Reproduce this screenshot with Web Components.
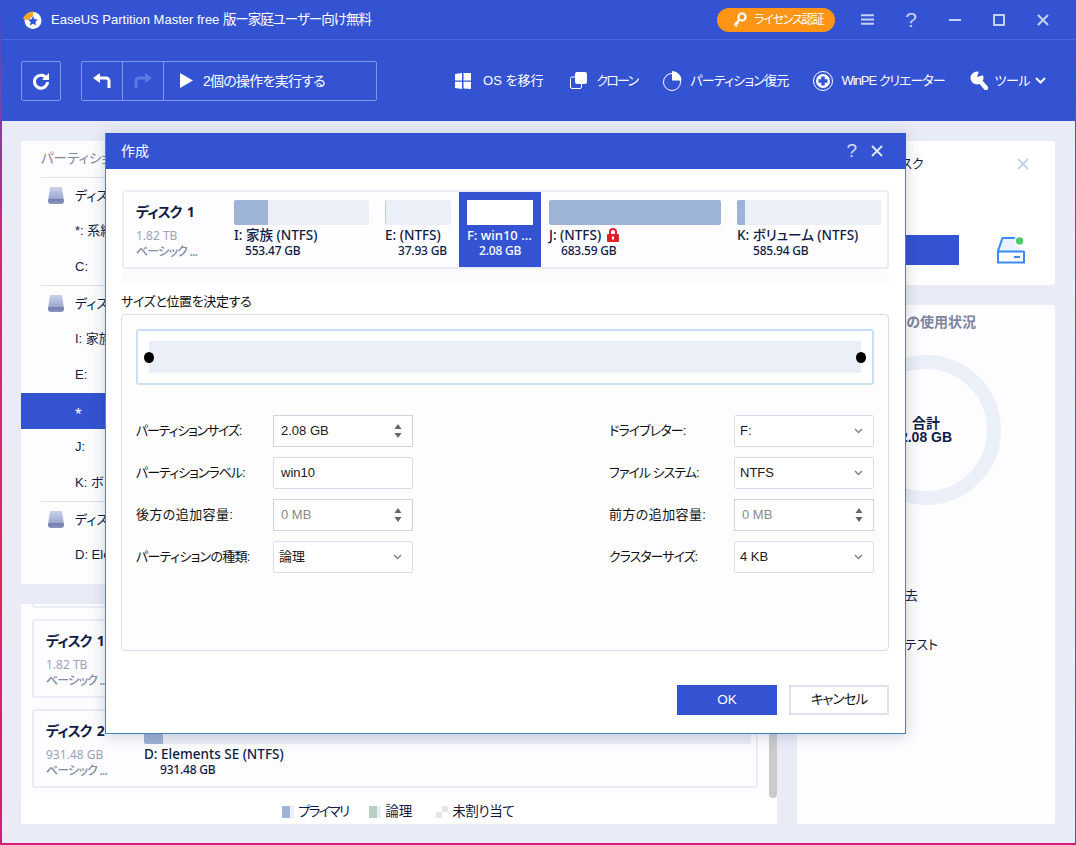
<!doctype html>
<html lang="ja">
<head>
<meta charset="utf-8">
<title>EaseUS Partition Master</title>
<style>
	html, body { margin: 0; height: 100%; }
	body {
		--ui: "Liberation Sans", "Noto Sans CJK JP", sans-serif;
		--seg: "Noto Sans", "Noto Sans CJK JP", sans-serif;
		--blue: #3353d3;
		--ink: #0f1b44;
		font: 13px/16px var(--ui);
		font-feature-settings: "palt";
		color: var(--ink);
		width: 1076px;
		height: 845px;
		box-sizing: border-box;
		padding: 0 1px 2px 2px;
		overflow: hidden;
		position: relative;
		background: linear-gradient(#3353d3 0, #d8246e 30%, #e0245f 70%, #d81a78 100%);
	}
</style>
</head>
<body>
<ep-app>
	<ep-titlebar slot="title"></ep-titlebar>
	<ep-toolbar slot="tools"></ep-toolbar>

	<ep-tree slot="tree"></ep-tree>

	<ep-diskpanel slot="disks">
		<ep-disk name="ディスク 1" cap="1.82 TB" type="ベーシック ..."></ep-disk>
		<ep-disk name="ディスク 2" cap="931.48 GB" type="ベーシック ...">
			<ep-part w="623" fill="19" label="D: Elements SE (NTFS)" size="931.48 GB" indent="16"></ep-part>
		</ep-disk>
	</ep-diskpanel>

	<ep-sidecard slot="side"></ep-sidecard>
	<ep-usage slot="side"></ep-usage>
</ep-app>

<ep-dialog heading="作成">
	<ep-disk slot="map" name="ディスク 1" cap="1.82 TB" type="ベーシック ...">
		<ep-part w="151" bar="135" fill="34" label="I: 家族 (NTFS)" size="553.47 GB" indent="11"></ep-part>
		<ep-part w="82" bar="66" fill="1" tone="#bccfc6" label="E: (NTFS)" size="37.93 GB" indent="13"></ep-part>
		<ep-part w="82" bar="66" fill="0" selected label="F: win10 ..." size="2.08 GB" indent="12"></ep-part>
		<ep-part w="188" bar="172" fill="172" label="J: (NTFS)" size="683.59 GB" indent="12">
			<svg slot="badge" width="12" height="14" viewBox="0 0 12 14"><path d="M3 6V4a3 3 0 0 1 6 0v2" fill="none" stroke="#e0202a" stroke-width="2"/><rect y="6" width="12" height="8" rx="1" fill="#e0202a"/><rect x="5" y="8.5" width="2" height="3" fill="#fff"/></svg>
		</ep-part>
		<ep-part w="152" bar="144" fill="8" label="K: ボリューム (NTFS)" size="585.94 GB" indent="16"></ep-part>
	</ep-disk>

	<ep-field slot="left" label="パーティションサイズ:" ls="-1.2" value="2.08 GB" kind="spin"></ep-field>
	<ep-field slot="left" label="パーティションラベル:" ls="-1" value="win10" kind="text"></ep-field>
	<ep-field slot="left" label="後方の追加容量:" ls="0.4" value="0 MB" kind="spin" disabled></ep-field>
	<ep-field slot="left" label="パーティションの種類:" ls="-0.7" value="論理" kind="select"></ep-field>

	<ep-field slot="right" label="ドライブレター:" ls="-0.9" value="F:" kind="select"></ep-field>
	<ep-field slot="right" label="ファイル システム:" ls="-1" value="NTFS" kind="select"></ep-field>
	<ep-field slot="right" label="前方の追加容量:" ls="0.4" value="0 MB" kind="spin" disabled></ep-field>
	<ep-field slot="right" label="クラスターサイズ:" ls="-1" value="4 KB" kind="select"></ep-field>
</ep-dialog>

<script>
const html = String.raw;

class Base extends HTMLElement {
	constructor() {
		super();
		this.attachShadow({ mode: "open" });
	}
	connectedCallback() {
		this.shadowRoot.innerHTML = this.render();
	}
	attr(name, fallback = "") {
		return this.getAttribute(name) ?? fallback;
	}
}

customElements.define("ep-app", class extends Base {
	render() {
		return html`
			<style>
				:host { display: grid; grid-template-rows: 40px 81px 1fr; height: 100%; background: #e9ecf7; }
				main {
					display: grid;
					grid-template-columns: 756px 258px;
					grid-template-rows: 443px 220px;
					column-gap: 20px;
					row-gap: 20px;
					padding: 20px 0 0 19px;
				}
				aside { grid-column: 2; grid-row: 1 / 3; display: grid; grid-template-rows: 144px 519px; row-gap: 20px; }
			</style>
			<slot name="title"></slot>
			<slot name="tools"></slot>
			<main>
				<slot name="tree"></slot>
				<aside><slot name="side"></slot></aside>
				<slot name="disks"></slot>
			</main>
		`;
	}
});

customElements.define("ep-titlebar", class extends Base {
	render() {
		return html`
			<style>
				:host {
					display: flex; align-items: center; background: var(--blue);
					border-bottom: 1px solid #4d6bdc; color: #fff; height: 39px; box-sizing: content-box;
				}
				.logo { margin: 0 9px 0 20px; }
				.name { font-size: 13px; white-space: nowrap; }
				.name span { font-size: 13.5px; letter-spacing: -1px; }
				.pill {
					margin-left: auto; width: 118px; height: 24px; border-radius: 12px; background: #ff9516;
					display: flex; align-items: center; gap: 7px; padding-left: 16px; box-sizing: border-box;
					font-size: 12px; letter-spacing: -1.2px;
				}
				.btn { display: flex; color: #c6d0f0; }
				.btn.q { font-size: 21px; width: 12px; justify-content: center; }
				.ctl { display: flex; align-items: center; margin-right: 26px; }
			</style>
			<svg class="logo" width="20" height="18" viewBox="0 0 20 18">
				<circle cx="11" cy="9.5" r="8.5" fill="#fff"/>
				<path d="M1 8 C2 4 6 1 11 0.5 L11 5 L6 9 Z" fill="#f5a623"/>
				<path d="M11 5l1.5 3.2 3.5.4-2.6 2.4.7 3.5-3.1-1.8-3.1 1.8.7-3.5L6 8.6l3.5-.4z" fill="#3353d3"/>
			</svg>
			<span class="name">EaseUS Partition Master free <span>版ー家庭ユーザー向け無料</span></span>
			<div class="pill">
				<svg width="14" height="15" viewBox="0 0 14 15"><circle cx="9" cy="5" r="3.6" fill="none" stroke="#fff" stroke-width="2.2"/><path d="M6.5 7.5L1.5 13M2 12.5l2 2M4 10.5l1.5 1.5" stroke="#fff" stroke-width="2" fill="none"/></svg>
				<span>ライセンス認証</span>
			</div>
			<div class="ctl">
				<svg class="btn" style="margin-left:26px" width="13" height="11" viewBox="0 0 13 11"><path d="M0 1.2h13M0 5.5h13M0 9.8h13" stroke="#c6d0f0" stroke-width="2"/></svg>
				<span class="btn q" style="margin-left:31px">?</span>
				<svg class="btn" style="margin-left:32px" width="12" height="2" viewBox="0 0 12 2"><rect width="12" height="2" fill="#c6d0f0"/></svg>
				<svg class="btn" style="margin-left:32px" width="12" height="12" viewBox="0 0 12 12"><rect x="1" y="1" width="10" height="10" fill="none" stroke="#c6d0f0" stroke-width="2"/></svg>
				<svg class="btn" style="margin-left:32px" width="12" height="12" viewBox="0 0 12 12"><path d="M1 1l10 10M11 1L1 11" stroke="#c6d0f0" stroke-width="2"/></svg>
			</div>
		`;
	}
});

customElements.define("ep-toolbar", class extends Base {
	render() {
		return html`
			<style>
				:host { display: flex; align-items: center; background: var(--blue); color: #fff; padding: 0 29px 0 19px; height: 81px; }
				.box { border: 1px solid #8297e3; border-radius: 2px; height: 40px; box-sizing: border-box; display: flex; align-items: center; }
				.refresh { width: 40px; justify-content: center; }
				.group { margin-left: 20px; width: 296px; }
				.cell { width: 41px; height: 100%; display: flex; align-items: center; justify-content: center; border-right: 1px solid #8297e3; box-sizing: border-box; }
				.run { display: flex; align-items: center; gap: 10px; padding-left: 16px; font-size: 14px; letter-spacing: -0.75px; }
				nav { margin-left: auto; display: flex; align-items: center; }
				.item { display: flex; align-items: center; gap: 9px; font-size: 13px; white-space: nowrap; }
			</style>
			<div class="box refresh">
				<svg width="18" height="18" viewBox="0 0 18 18"><path d="M14.5 6.2A6.5 6.5 0 1 0 15.5 10" fill="none" stroke="#fff" stroke-width="3"/><path d="M17 1v7h-7z" fill="#fff"/></svg>
			</div>
			<div class="box group">
				<div class="cell">
					<svg width="18" height="15" viewBox="0 0 18 15"><path d="M0 5l7-5v10z" fill="#fff"/><path d="M6 5h7a3 3 0 0 1 3 3v7" fill="none" stroke="#fff" stroke-width="3"/></svg>
				</div>
				<div class="cell">
					<svg width="18" height="15" viewBox="0 0 18 15"><path d="M18 5l-7-5v10z" fill="#5d7ae4"/><path d="M12 5H5a3 3 0 0 0-3 3v7" fill="none" stroke="#5d7ae4" stroke-width="3"/></svg>
				</div>
				<div class="run">
					<svg width="13" height="15" viewBox="0 0 13 15"><path d="M0 0l13 7.5L0 15z" fill="#fff"/></svg>
					<span>2個の操作を実行する</span>
				</div>
			</div>
			<nav>
				<div class="item" style="gap:12px;margin-right:27px">
					<svg width="16" height="16" viewBox="0 0 16 16"><path d="M0 1l7-1v7.400H0zM8.500 0L16 0v7.400H8.500zM0 8.800h7V16l-7-1zM8.500 8.800H16V16l-7.500-.5z" fill="#fff"/></svg>
					<span>OS を移行</span>
				</div>
				<div class="item" style="margin-right:26px">
					<svg width="17" height="17" viewBox="0 0 17 17"><rect x="0.500" y="5" width="11" height="11.500" rx="1.500" fill="none" stroke="#fff"/><rect x="5" y="0" width="12" height="12" rx="2" fill="#fff"/></svg>
					<span style="letter-spacing:-1.8px">クローン</span>
				</div>
				<div class="item" style="gap:8px;margin-right:25px">
					<svg width="19" height="20" viewBox="0 0 19 20"><circle cx="9" cy="11" r="8.500" fill="none" stroke="#fff"/><path d="M9 0a9.500 9.500 0 0 1 9.500 9.500H9z" fill="#fff"/></svg>
					<span style="letter-spacing:-0.8px">パーティション復元</span>
				</div>
				<div class="item" style="gap:8px;margin-right:25px">
					<svg width="20" height="20" viewBox="0 0 20 20"><circle cx="10" cy="10" r="9.500" fill="none" stroke="#fff"/><circle cx="10" cy="10" r="7" fill="#fff"/><path d="M10 5.500v9M5.500 10h9" stroke="#3353d3" stroke-width="3.500"/></svg>
					<span style="letter-spacing:-1px">WinPE クリエーター</span>
				</div>
				<div class="item" style="gap:7px">
					<svg width="18" height="19" viewBox="0 0 18 19"><circle cx="7" cy="7" r="6.500" fill="#fff"/><path d="M7 6L9 0h5v4z" fill="#3353d3"/><path d="M9 9l7 8" stroke="#fff" stroke-width="4.500" stroke-linecap="round"/></svg>
					<span style="letter-spacing:-0.5px">ツール</span>
					<svg width="11" height="7" viewBox="0 0 11 7" style="margin-left:-2px"><path d="M1 1l4.500 4.500L10 1" fill="none" stroke="#fff" stroke-width="2"/></svg>
				</div>
			</nav>
		`;
	}
});

customElements.define("ep-tree", class extends Base {
	render() {
		const row = (label, selected) => html`<div class="row ${selected ? "sel" : ""}">${label}</div>`;
		const disk = (label) => html`
			<div class="row disk">
				<svg width="16" height="17" viewBox="0 0 16 17">
					<defs><linearGradient id="g" x2="0" y2="1"><stop offset="0" stop-color="#ccd3ea"/><stop offset="0.7" stop-color="#9aa6cc"/><stop offset="0.71" stop-color="#6f7dac"/><stop offset="1" stop-color="#8a97c2"/></linearGradient></defs>
					<path d="M2 0h12l2 14a3 3 0 0 1-2 3H2a3 3 0 0 1-2-3z" fill="url(#g)"/>
				</svg>
				<span>${label}</span>
			</div>`;
		return html`
			<style>
				:host { display: block; background: #fdfdff; height: 443px; overflow: hidden; }
				.head { height: 36px; padding-left: 20px; line-height: 36px; color: #7d859f; font-size: 13.5px; }
				.group { border-top: 1px solid #dfe3ee; margin-left: 20px; }
				.group > .row { margin-left: -20px; }
				.row { height: 36px; line-height: 36px; padding-left: 54px; }
				.row.disk { height: 35px; line-height: 35px; display: flex; align-items: center; padding-left: 27px; gap: 11px; }
				.row.sel { background: var(--blue); color: #fff; font-size: 17px; line-height: 44px; }
			</style>
			<div class="head">パーティション</div>
			<div class="group">${disk("ディスク")}${row("*: 系統")}${row("C:")}</div>
			<div class="group">${disk("ディスク")}${row("I: 家族")}${row("E:")}${row("*", true)}${row("J:")}${row("K: ボリ")}</div>
			<div class="group">${disk("ディスク")}${row("D: Ele")}</div>
		`;
	}
});

customElements.define("ep-disk", class extends Base {
	render() {
		return html`
			<style>
				:host {
					display: flex; height: 79px; box-sizing: border-box; background: #fdfdff;
					border: 2px solid #e9edf6; border-radius: 3px; font-family: var(--seg);
				}
				.info { width: 90px; padding-left: 12px; flex: none; }
				.name { font-size: 14px; font-weight: 700; line-height: 24px; margin-top: 8px; letter-spacing: -1px; word-spacing: 3px; }
				.cap { font-size: 12px; line-height: 16px; color: #9aa3b8; margin-top: 4px; }
				.type { font-size: 12px; line-height: 16px; color: #8189a3; font-weight: 500; white-space: nowrap; letter-spacing: -0.8px; }
				.parts { display: flex; flex: 1; min-width: 0; }
			</style>
			<div class="info">
				<div class="name">${this.attr("name")}</div>
				<div class="cap">${this.attr("cap")}</div>
				<div class="type">${this.attr("type")}</div>
			</div>
			<div class="parts"><slot></slot></div>
		`;
	}
});

customElements.define("ep-part", class extends Base {
	render() {
		const w = +this.attr("w");
		const bar = this.attr("bar", w - 16);
		const selected = this.hasAttribute("selected");
		return html`
			<style>
				:host {
					display: block; width: ${w}px; flex: none; box-sizing: border-box; padding: 8px 8px 0;
					font-family: var(--seg); ${selected ? "background: var(--blue); color: #fff;" : ""}
				}
				.bar { width: ${bar}px; height: 25px; background: ${selected ? "#fff" : "#ebeff8"}; border-radius: ${selected ? 0 : 2}px; overflow: hidden; }
				.fill { width: ${this.attr("fill", 0)}px; height: 100%; background: ${this.attr("tone", "#9db4d6")}; }
				.label { display: flex; align-items: center; gap: 6px; margin-top: 2px; line-height: 16px; font-size: ${selected ? 13 : 13.5}px; font-weight: 500; white-space: nowrap; }
				.size { padding-left: ${this.attr("indent", 0)}px; line-height: 16px; font-size: 12px; letter-spacing: -0.2px; font-weight: 500; white-space: nowrap; }
			</style>
			<div class="bar"><div class="fill"></div></div>
			<div class="label"><span>${this.attr("label")}</span><slot name="badge"></slot></div>
			<div class="size">${this.attr("size")}</div>
		`;
	}
});

customElements.define("ep-diskpanel", class extends Base {
	render() {
		return html`
			<style>
				:host { display: block; background: #fff; height: 220px; overflow: hidden; }
				.scroll { display: flex; height: 194px; background: #fdfdff; padding-left: 11px; box-sizing: border-box; }
				.list { width: 726px; display: flex; flex-direction: column; gap: 11px; }
				.cut { height: 4px; border: 2px solid #e9edf6; border-top: 0; box-sizing: border-box; border-radius: 0 0 3px 3px; }
				.bar { width: 8px; margin-left: 11px; margin-top: 60px; background: #cbcbcb; border-radius: 0 0 4px 4px; }
				::slotted(ep-disk) { flex: none; }
				.legend { display: flex; height: 26px; align-items: center; padding: 2px 0 0 261px; box-sizing: border-box; font-size: 13.5px; }
				.key { display: flex; align-items: center; gap: 4px; white-space: nowrap; }
				.swatch { width: 12px; height: 12px; flex: none; }
				.prim { background: linear-gradient(90deg, #9db4d6 66%, #ebeff8 66%); }
				.logi { background: linear-gradient(90deg, #b8d0c0 66%, #ebeff8 66%); }
				.free { background: conic-gradient(#e6e6e6 25%, #fff 0 50%, #e6e6e6 0 75%, #fff 0); background-size: 12px 12px; }
			</style>
			<div class="scroll">
				<div class="list"><div class="cut"></div><slot></slot></div>
				<div class="bar"></div>
			</div>
			<div class="legend">
				<div class="key" style="margin-right:21px"><i class="swatch prim"></i><span style="letter-spacing:-1.8px">プライマリ</span></div>
				<div class="key" style="margin-right:24px"><i class="swatch logi"></i><span>論理</span></div>
				<div class="key"><i class="swatch free"></i><span style="letter-spacing:-0.4px">未割り当て</span></div>
			</div>
		`;
	}
});

customElements.define("ep-sidecard", class extends Base {
	render() {
		return html`
			<style>
				:host { display: block; background: #fff; border-radius: 2px; height: 144px; position: relative; }
				.top { display: flex; justify-content: space-between; align-items: center; height: 46px; padding: 0 26px 0 82px; }
				.low { display: flex; align-items: center; margin-top: 48px; padding-left: 20px; }
				.action { width: 142px; height: 30px; background: var(--blue); }
				.drive { margin-left: 37px; }
			</style>
			<div class="top">
				<span>ディスク</span>
				<svg width="12" height="12" viewBox="0 0 12 12"><path d="M1 1l10 10M11 1L1 11" stroke="#c6d0ec" stroke-width="2"/></svg>
			</div>
			<div class="low">
				<div class="action"></div>
				<svg class="drive" width="29" height="28" viewBox="0 0 29 28">
					<path d="M6 3h15l5 14H2z" fill="#e9f2fe"/>
					<path d="M20 2H6.500L2 15v11.500h26V15" fill="none" stroke="#3a8bf5" stroke-width="2"/>
					<path d="M2 15.500h26" stroke="#3a8bf5" stroke-width="2"/>
					<rect x="18" y="20" width="6" height="2" fill="#3a8bf5"/>
					<circle cx="23.500" cy="5" r="5.500" fill="#fff"/>
					<circle cx="23.500" cy="5" r="3.800" fill="#4ecb71"/>
				</svg>
			</div>
		`;
	}
});

customElements.define("ep-usage", class extends Base {
	render() {
		return html`
			<style>
				:host { display: block; background: #fdfdff; border-radius: 2px; height: 519px; }
				h3 { margin: 0; padding: 9px 0 0 60px; font-size: 14px; line-height: 16px; color: #7d859f; white-space: nowrap; }
				.ring { position: relative; width: 150px; height: 150px; margin: 25px auto 0; }
				.sum { position: absolute; inset: 0; display: flex; flex-direction: column; align-items: center; justify-content: center; font-weight: 700; font-size: 14px; line-height: 14px; }
				.tool { margin: 0; white-space: nowrap; }
			</style>
			<h3>ディスクの使用状況</h3>
			<div class="ring">
				<svg width="150" height="150" viewBox="0 0 150 150"><circle cx="75" cy="75" r="68" fill="none" stroke="#ebeff8" stroke-width="14"/></svg>
				<div class="sum"><span>合計</span><span>2.08 GB</span></div>
			</div>
			<p class="tool" style="padding:83px 0 0 50px">ディスク消去</p>
			<p class="tool" style="padding:33px 0 0 50px">サーフェステスト</p>
		`;
	}
});

customElements.define("ep-field", class extends Base {
	render() {
		const kind = this.attr("kind", "text");
		const off = this.hasAttribute("disabled");
		const spin = html`<svg width="8" height="14" viewBox="0 0 8 14"><path d="M4 0l3.500 5h-7zM4 14l-3.500-5h7z" fill="#666"/></svg>`;
		const chevron = html`<svg width="9" height="6" viewBox="0 0 9 6"><path d="M1 1l3.500 3.500L8 1" fill="none" stroke="#7c8496" stroke-width="1.500"/></svg>`;
		return html`
			<style>
				:host { display: flex; align-items: center; justify-content: space-between; height: 32px; }
				.input {
					width: 140px; height: 32px; box-sizing: border-box; display: flex; align-items: center; justify-content: space-between;
					padding: 0 10px 0 ${kind === "select" ? 5 : 7}px; background: #fff;
					border: 1px solid ${kind === "spin" ? "#ced3de" : "#d5ddee"}; border-radius: ${kind === "spin" ? 0 : 2}px;
					color: ${off ? "#8a8a8a" : "#1a1a1a"};
				}
				.label { white-space: nowrap; color: #111; letter-spacing: ${this.attr("ls", 0)}px; }
			</style>
			<span class="label">${this.attr("label")}</span>
			<div class="input"><span>${this.attr("value")}</span>${kind === "spin" ? spin : kind === "select" ? chevron : ""}</div>
		`;
	}
});

customElements.define("ep-dialog", class extends Base {
	render() {
		return html`
			<style>
				:host {
					position: absolute; left: 105px; top: 133px; width: 801px; height: 601px; box-sizing: border-box;
					background: #fff; border: 1px solid #3f86c4; border-top: 0; box-shadow: 0 2px 14px rgba(30, 40, 80, 0.22);
					display: flex; flex-direction: column;
				}
				header {
					height: 36px; flex: none; background: var(--blue); color: #fff; display: flex; align-items: center;
					padding: 0 23px 0 15px; font-size: 14px; margin: 0 -1px 0 0;
				}
				header span { margin-right: auto; }
				header b { font-weight: 400; font-size: 19px; color: #d5dcf5; margin-right: 14px; }
				.map { margin: 21px 16px 0; }
				.band { height: 15px; margin: 0 16px; background: #fcfcfe; }
				h4 { margin: 0 15px; padding-top: 10px; font-weight: 400; font-size: 13px; line-height: 16px; height: 20px; color: #111; white-space: nowrap; letter-spacing: -0.35px; }
				.panel {
					margin: 0 16px 0 15px; height: 337px; box-sizing: border-box; background: #fdfdfe;
					border: 1px solid #d6dceb; border-radius: 4px; padding: 14px 14px 0;
				}
				.slider {
					height: 56px; box-sizing: border-box; border: 2px solid #c9dff9; border-radius: 3px; background: #fff;
					padding: 10px 11px; position: relative;
				}
				.track { height: 32px; background: #ebeff8; }
				.knob { position: absolute; top: 21px; width: 10px; height: 11px; border-radius: 50%; background: #000; }
				.grid { display: grid; grid-template-columns: 277px 265px; justify-content: space-between; margin-top: 30px; }
				.col { display: flex; flex-direction: column; gap: 10px; }
				footer { display: flex; justify-content: flex-end; gap: 12px; margin: 34px 16px 0; }
				button {
					width: 100px; height: 30px; font: inherit; font-size: 13.5px; border-radius: 0; padding: 0;
				}
				.ok { background: var(--blue); color: #fff; border: 0; }
				.no { background: #fff; color: #111; border: 2px solid #dde2f0; letter-spacing: -1px; }
			</style>
			<header>
				<span>${this.attr("heading")}</span>
				<b>?</b>
				<svg width="12" height="12" viewBox="0 0 12 12"><path d="M1 1l10 10M11 1L1 11" stroke="#e4e9fa" stroke-width="1.800"/></svg>
			</header>
			<div class="map"><slot name="map"></slot></div>
			<div class="band"></div>
			<h4>サイズと位置を決定する</h4>
			<div class="panel">
				<div class="slider">
					<div class="track"></div>
					<i class="knob" style="left:6px"></i>
					<i class="knob" style="right:6px"></i>
				</div>
				<div class="grid">
					<div class="col"><slot name="left"></slot></div>
					<div class="col"><slot name="right"></slot></div>
				</div>
			</div>
			<footer>
				<button class="ok">OK</button>
				<button class="no">キャンセル</button>
			</footer>
		`;
	}
});
</script>
</body>
</html>
